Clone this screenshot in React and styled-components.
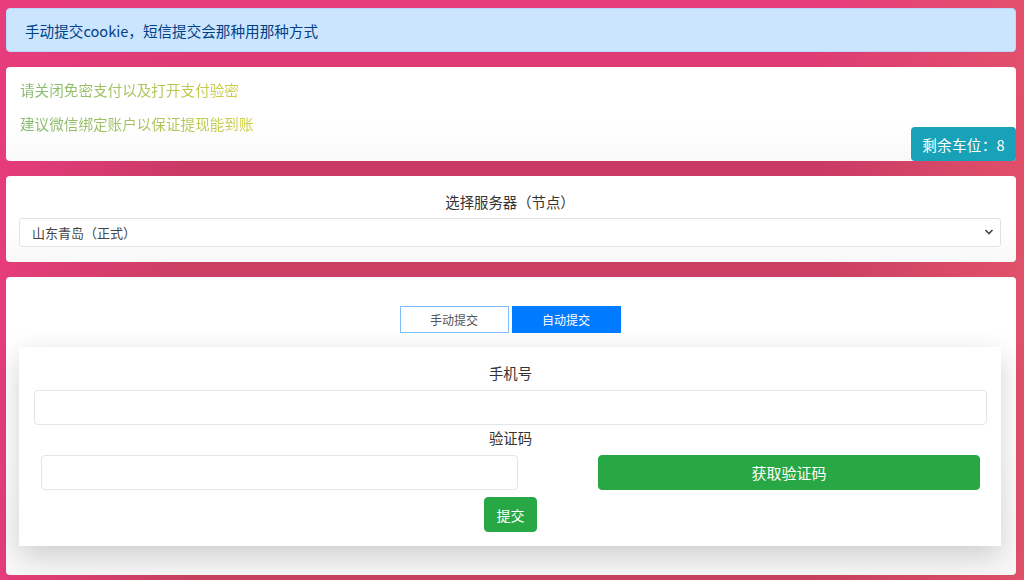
import React, { useState } from 'react';
import styled, { createGlobalStyle } from 'styled-components';

const GlobalStyle = createGlobalStyle`
  html, body {
    margin: 0;
    padding: 0;
  }
  body {
    width: 1024px;
    height: 580px;
    overflow: hidden;
    font-family: "Noto Sans CJK SC", "Noto Sans", sans-serif;
    background:
      linear-gradient(90deg, rgba(232, 60, 125, 0.9) 0%, rgba(200, 56, 104, 0) 18%, rgba(200, 68, 94, 0) 80%, rgba(226, 82, 106, 0.9) 100%),
      linear-gradient(180deg, #e83d7c 0%, #c93a64 30%, #cc4462 60%, #c94160 100%);
  }
`;

const Page = styled.div`
  display: flex;
  flex-direction: column;
  gap: 15px;
  padding: 8px 8px 0 6px;
`;

const Alert = styled.div`
  height: 42px;
  display: flex;
  align-items: center;
  padding: 0 18px;
  background: #cce5ff;
  border: 1px solid #b8daff;
  border-radius: 4px;
  color: #004085;
  font-size: 14.6px;
`;

const Card = styled.div`
  position: relative;
  background: linear-gradient(180deg, #ffffff 60%, #f8f8f8 100%);
  border-radius: 4px;
  padding: ${({ pad }) => pad || '12px 14px'};
  height: ${({ h }) => h};
  box-sizing: border-box;
`;

const Tip = styled.div`
  font-size: 14.6px;
  line-height: 20px;
  margin: ${({ m }) => m || '0'};
  span {
    background: linear-gradient(90deg, #82b86e 0%, #a8c45a 55%, #cfcf3f 100%);
    -webkit-background-clip: text;
    background-clip: text;
    color: transparent;
  }
`;

const Badge = styled.div`
  position: absolute;
  right: 0;
  bottom: 0;
  height: 34px;
  padding: 0 11px;
  display: flex;
  align-items: center;
  background: #17a2b8;
  color: #fff;
  font-size: 14.6px;
  border-radius: 4px;
  letter-spacing: 0.3px;
`;

const Label = styled.div`
  text-align: center;
  font-size: 14.4px;
  color: #333;
  line-height: 20px;
  margin: ${({ m }) => m || '0'};
`;

const SelectWrap = styled.div`
  position: relative;
`;

const Select = styled.select`
  width: 100%;
  height: 29px;
  appearance: none;
  background: #fff;
  border: 1px solid #dfe3e8;
  border-radius: 3px;
  padding: 0 12px;
  font-family: inherit;
  font-size: 13px;
  color: #444;
`;

const Chevron = styled.svg`
  position: absolute;
  right: 7px;
  top: 10px;
  pointer-events: none;
`;

const Tabs = styled.div`
  display: flex;
  justify-content: center;
  gap: 3px;
  margin: 17px 0 14px;
`;

const Tab = styled.button`
  width: 109px;
  height: 27px;
  font-family: inherit;
  font-size: 12px;
  border: 1px solid ${({ active }) => (active ? '#007bff' : '#80bdff')};
  background: ${({ active }) => (active ? '#007bff' : '#fff')};
  color: ${({ active }) => (active ? '#fff' : '#555')};
  padding: 0;
  cursor: pointer;
`;

const Panel = styled.div`
  background: #fff;
  box-shadow: 0 10px 28px rgba(0, 0, 0, 0.18);
  padding: 14px 14px 14px 15px;
  display: flex;
  flex-direction: column;
`;

const Input = styled.input`
  box-sizing: border-box;
  height: 35px;
  width: ${({ w }) => w || '100%'};
  margin-left: ${({ ml }) => ml || '0'};
  border: 1px solid #e2e6ea;
  border-radius: 4px;
  outline: none;
  font-family: inherit;
  font-size: 14px;
  padding: 0 10px;
`;

const CodeRow = styled.div`
  display: flex;
  align-items: center;
`;

const GreenButton = styled.button`
  height: 35px;
  width: ${({ w }) => w};
  margin-left: ${({ ml }) => ml || '0'};
  background: #28a745;
  border: 1px solid #28a745;
  border-radius: 4px;
  color: #fff;
  font-family: inherit;
  font-size: ${({ fs }) => fs || '14px'};
  padding: 0;
  cursor: pointer;
`;

const Center = styled.div`
  display: flex;
  justify-content: center;
  margin-top: 7px;
`;

export default function App() {
  const [mode, setMode] = useState('auto');

  return (
    <>
      <GlobalStyle />
      <Page>
        <Alert>手动提交cookie，短信提交会那种用那种方式</Alert>

        <Card h="94px" pad="13px 14px">
          <Tip><span>请关闭免密支付以及打开支付验密</span></Tip>
          <Tip m="14px 0 0"><span>建议微信绑定账户以保证提现能到账</span></Tip>
          <Badge>剩余车位：8</Badge>
        </Card>

        <Card h="86px" pad="16px 15px 0 13px">
          <Label m="0 0 6px">选择服务器（节点）</Label>
          <SelectWrap>
            <Select defaultValue="qd">
              <option value="qd">山东青岛（正式）</option>
            </Select>
            <Chevron width="10" height="8" viewBox="0 0 10 8">
              <path d="M1.5 2l3.5 3.5L8.5 2" fill="none" stroke="#444" strokeWidth="1.6" />
            </Chevron>
          </SelectWrap>
        </Card>

        <Card h="298px" pad="12px 15px 0 13px">
          <Tabs>
            <Tab active={mode === 'manual'} onClick={() => setMode('manual')}>手动提交</Tab>
            <Tab active={mode === 'auto'} onClick={() => setMode('auto')}>自动提交</Tab>
          </Tabs>
          <Panel>
            <Label m="2px 0 7px">手机号</Label>
            <Input />
            <Label m="3px 0 7px">验证码</Label>
            <CodeRow>
              <Input w="477px" ml="7px" />
              <GreenButton w="382px" ml="80px" fs="15px">获取验证码</GreenButton>
            </CodeRow>
            <Center>
              <GreenButton w="53px">提交</GreenButton>
            </Center>
          </Panel>
        </Card>
      </Page>
    </>
  );
}
